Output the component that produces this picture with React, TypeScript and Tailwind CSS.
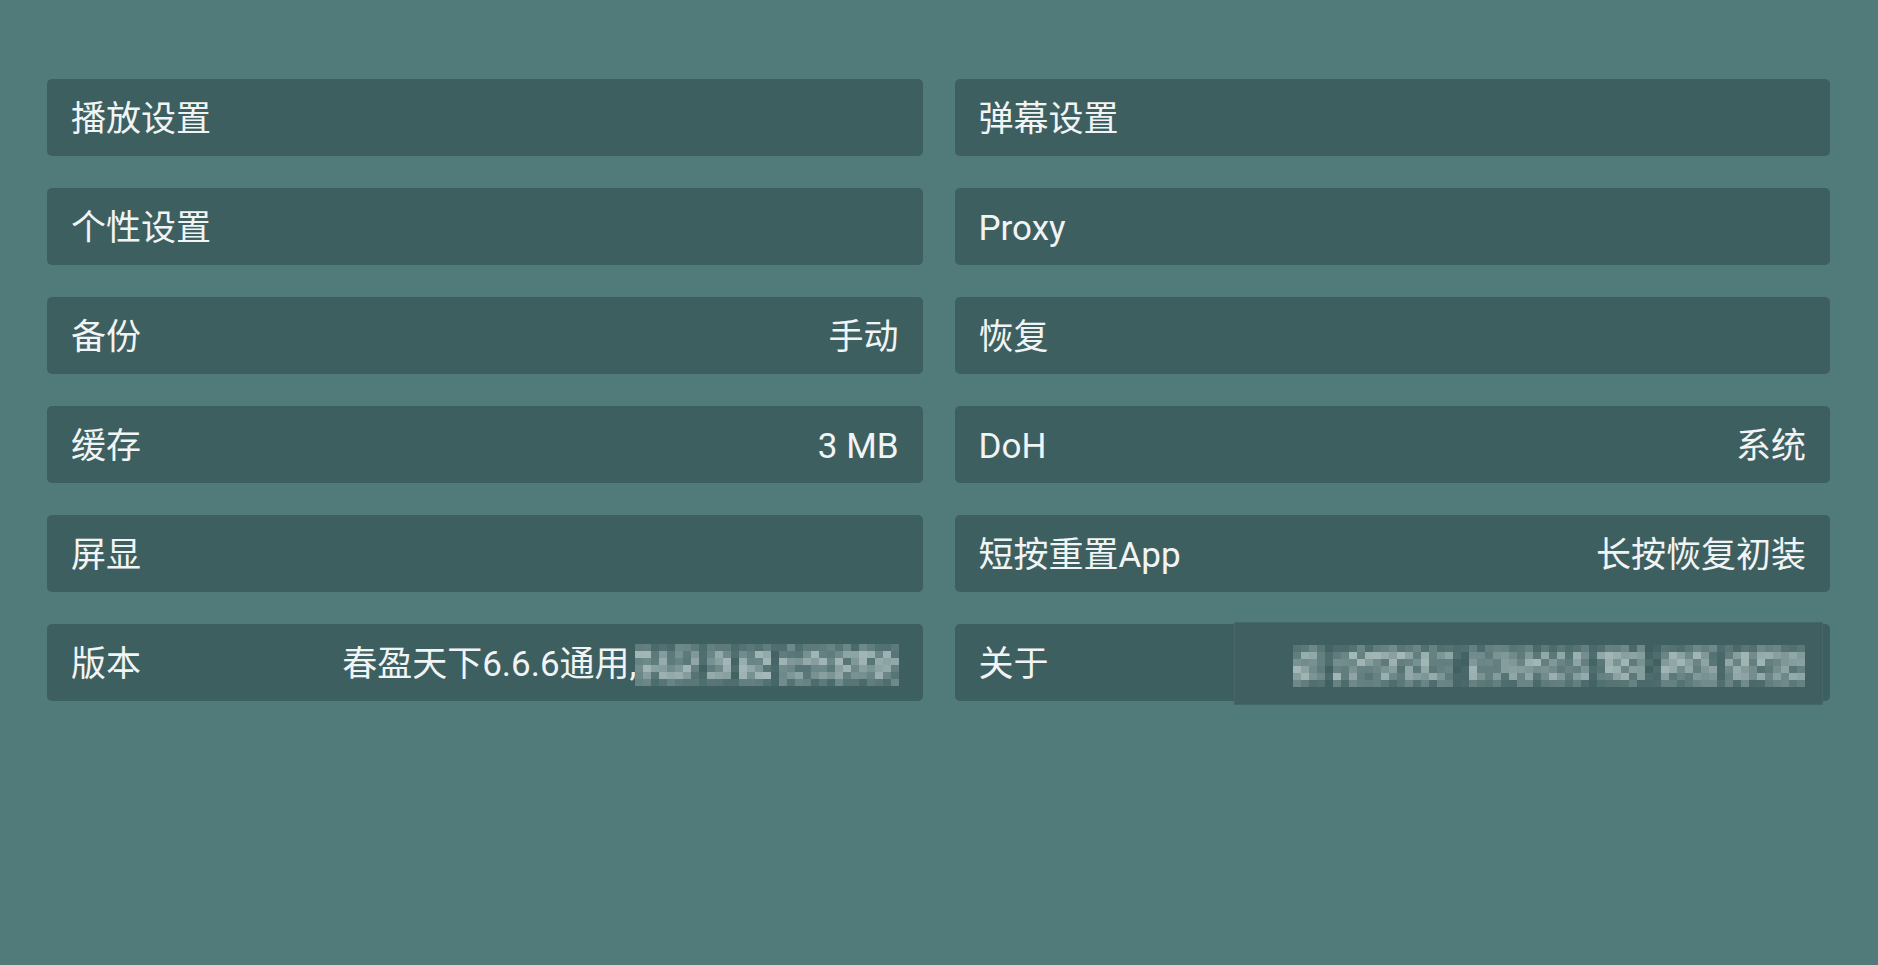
import React from 'react';

type Row = { label: string; value?: string; blur?: 'version' | 'about' };

const rows: Row[] = [
  { label: '播放设置' },
  { label: '弹幕设置' },
  { label: '个性设置' },
  { label: 'Proxy' },
  { label: '备份', value: '手动' },
  { label: '恢复' },
  { label: '缓存', value: '3 MB' },
  { label: 'DoH', value: '系统' },
  { label: '屏显' },
  { label: '短按重置App', value: '长按恢复初装' },
  { label: '版本', value: '春盈天下6.6.6通用,', blur: 'version' },
  { label: '关于', blur: 'about' },
];

// pseudo random so the mosaic stays the same on every render
const rand = (seed: number) => {
  const x = Math.sin(seed * 12.9898 + 78.233) * 43758.5453;
  return x - Math.floor(x);
};

const Mosaic: React.FC<{ cols: number; rows: number; seed: number; gaps?: number[] }> = ({ cols, rows: r, seed, gaps = [] }) => {
  const cells = [];
  for (let y = 0; y < r; y++) {
    for (let x = 0; x < cols; x++) {
      const edge = y === 0 || y === r - 1;
      let a = 0.15 + rand(seed + x * 31 + y * 7) * 0.5;
      if (edge) a *= 0.5;
      if (gaps.includes(x)) a = rand(seed + x + y) * 0.12;
      cells.push(
        <div key={`${x}-${y}`} style={{ backgroundColor: `rgba(220,232,232,${a.toFixed(2)})` }} />
      );
    }
  }
  return (
    <div
      className="grid shrink-0"
      style={{ gridTemplateColumns: `repeat(${cols}, 8px)`, gridTemplateRows: `repeat(${r}, 7px)` }}
    >
      {cells}
    </div>
  );
};

const SettingCard: React.FC<{ row: Row }> = ({ row }) => (
  <div className="relative h-[77px] rounded-[5px] bg-[#3e5f60] px-6 pt-[5px] flex items-center justify-between">
    <span className="whitespace-nowrap">{row.label}</span>
    {row.blur === 'version' ? (
      <div className="flex items-center">
        <span className="whitespace-nowrap">{row.value}</span>
        <div className="-ml-[2px] flex items-center bg-[#3f6061] py-[2px]">
          <Mosaic cols={33} rows={6} seed={11} gaps={[8, 12, 17]} />
        </div>
      </div>
    ) : row.blur === 'about' ? (
      <div className="absolute right-[7px] top-[-2px] h-[83px] w-[589px] bg-[#3f5f60] border border-[#456767] flex items-center justify-end pr-[17px] pt-[4px]">
        <Mosaic cols={64} rows={6} seed={57} gaps={[4, 20, 21, 37, 44, 45, 53]} />
      </div>
    ) : (
      row.value && <span className="whitespace-nowrap">{row.value}</span>
    )}
  </div>
);

export default function App() {
  return (
    <div
      className="min-h-screen w-full bg-[#517a7a] pt-[79px] pl-[47px] pr-[48px] text-[35px] text-[#f1f4f4]"
      style={{ fontFamily: 'Roboto, "Noto Sans CJK SC", sans-serif' }}
    >
      <div className="grid grid-cols-2 gap-x-8 gap-y-8">
        {rows.map((r) => (
          <SettingCard key={r.label} row={r} />
        ))}
      </div>
    </div>
  );
}
